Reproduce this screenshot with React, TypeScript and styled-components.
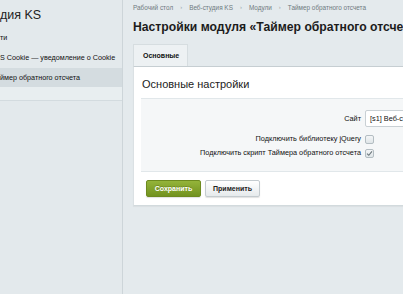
import React from 'react';
import styled, { createGlobalStyle } from 'styled-components';

const GlobalStyle = createGlobalStyle`
  html, body {
    margin: 0;
    padding: 0;
    background: #e4eaed;
    overflow: hidden;
  }
  body {
    font-family: 'Liberation Sans', Arial, sans-serif;
    color: #000;
  }
`;

const Page = styled.div`
  display: flex;
  width: 700px;
  height: 294px;
`;

const Sidebar = styled.aside`
  width: 122px;
  flex-shrink: 0;
  border-right: 1px solid #cdd5d9;
  background: #e3e9ec;
  overflow: hidden;
`;

const SideTitle = styled.div`
  font-size: 12.5px;
  color: #222;
  white-space: nowrap;
  padding: 7px 0 0 0;
  height: 21px;
  line-height: 16px;
`;

const SideItem = styled.div<{ $active?: boolean }>`
  font-size: 7.2px;
  color: #111;
  white-space: nowrap;
  height: ${(p) => (p.$active ? '19px' : '20px')};
  line-height: ${(p) => (p.$active ? '19px' : '20px')};
  background: ${(p) => (p.$active ? '#d4dce0' : 'transparent')};
`;

const SideSpacer = styled.div`
  height: 13px;
  background: #e8eef0;
  border-bottom: 1px solid #d3dbdf;
`;

const Main = styled.main`
  flex: 1;
  padding-left: 10px;
  min-width: 0;
`;

const Crumbs = styled.nav`
  display: flex;
  align-items: center;
  gap: 7px;
  height: 12px;
  padding-top: 1px;
  font-size: 6.4px;
  color: #6f7a80;
  white-space: nowrap;
`;

const Sep = styled.span`
  color: #9aa4a9;
  font-size: 6px;
`;

const Title = styled.h1`
  margin: 0;
  padding-top: 6px;
  height: 31px;
  box-sizing: border-box;
  font-size: 12.2px;
  line-height: 16px;
  font-weight: bold;
  color: #1c1c1c;
  white-space: nowrap;
`;

const Tabs = styled.div`
  display: flex;
  height: 22px;
`;

const Tab = styled.div`
  display: flex;
  align-items: center;
  padding: 0 9px;
  width: 55px;
  box-sizing: border-box;
  background: #edf1f3;
  border: 1px solid #d6dde0;
  border-bottom: none;
  font-size: 7px;
  font-weight: bold;
  color: #111;
`;

const Panel = styled.section`
  background: #fff;
  border-top: 1px solid #c6ced2;
  border-left: 1px solid #dbe1e4;
  border-bottom: 1px solid #d2dadd;
  box-shadow: 0 1px 1px rgba(0, 0, 0, 0.04);
`;

const PanelHead = styled.div`
  height: 31px;
  box-sizing: border-box;
  padding: 10px 0 0 8px;
  font-size: 11px;
  line-height: 14px;
  color: #222;
`;

const FormArea = styled.div`
  margin-left: 7px;
  background: #f5f7f8;
  border-top: 1px solid #e1e7ea;
  border-bottom: 1px solid #e1e7ea;
  padding: 11px 0 12px;
  display: grid;
  grid-template-columns: 220px 1fr;
  column-gap: 4px;
  row-gap: 2px;
  align-items: center;
`;

const Label = styled.div<{ $spaced?: boolean }>`
  text-align: right;
  font-size: 7.3px;
  color: #111;
  white-space: nowrap;
  line-height: 12px;
  margin-bottom: ${(p) => (p.$spaced ? '4px' : '0')};
`;

const Select = styled.div`
  width: 200px;
  height: 17px;
  box-sizing: border-box;
  border: 1px solid #c9d0d4;
  border-radius: 2px;
  background: #fff;
  font-size: 7.3px;
  line-height: 15px;
  padding-left: 4px;
  color: #111;
  margin-bottom: 4px;
`;

const Check = styled.div`
  width: 9px;
  height: 9px;
  box-sizing: border-box;
  border: 1px solid #b3bdc2;
  border-radius: 2px;
  background: linear-gradient(#f4f6f7, #dfe5e8);
  display: flex;
  align-items: center;
  justify-content: center;
`;

const Buttons = styled.div`
  display: flex;
  gap: 4px;
  padding: 8px 0 8px 12px;
`;

const Button = styled.button<{ $primary?: boolean }>`
  height: 17px;
  width: 55px;
  padding: 0;
  border-radius: 2px;
  font-family: 'Liberation Sans', Arial, sans-serif;
  font-size: 7px;
  font-weight: bold;
  cursor: pointer;
  border: 1px solid ${(p) => (p.$primary ? '#6d8a1f' : '#c4cbcf')};
  color: ${(p) => (p.$primary ? '#fff' : '#222')};
  background: ${(p) =>
    p.$primary
      ? 'linear-gradient(#94b43a, #72921f)'
      : 'linear-gradient(#ffffff, #e6eaec)'};
  box-shadow: 0 1px 1px rgba(0, 0, 0, 0.12);
  text-shadow: ${(p) => (p.$primary ? '0 -1px 0 rgba(0,0,0,0.2)' : 'none')};
`;

const CheckMark = () => (
  <svg width="7" height="7" viewBox="0 0 7 7">
    <path d="M1 3.6 L2.8 5.3 L6 1.4" fill="none" stroke="#6c777c" strokeWidth="1.1" />
  </svg>
);

export default function App() {
  return (
    <>
      <GlobalStyle />
      <Page>
        <Sidebar>
          <SideTitle>дия KS</SideTitle>
          <SideItem>ти</SideItem>
          <SideItem>S Cookie — уведомление о Cookie</SideItem>
          <SideItem $active>ймер обратного отсчета</SideItem>
          <SideSpacer />
        </Sidebar>
        <Main>
          <Crumbs>
            <span>Рабочий стол</span>
            <Sep>›</Sep>
            <span>Веб-студия KS</span>
            <Sep>›</Sep>
            <span>Модули</span>
            <Sep>›</Sep>
            <span>Таймер обратного отсчета</span>
          </Crumbs>
          <Title>Настройки модуля «Таймер обратного отсчета»</Title>
          <Tabs>
            <Tab>Основные</Tab>
          </Tabs>
          <Panel>
            <PanelHead>Основные настройки</PanelHead>
            <FormArea>
              <Label $spaced>Сайт</Label>
              <Select>[s1] Веб-студия KS</Select>
              <Label>Подключить библиотеку jQuery</Label>
              <Check />
              <Label>Подключить скрипт Таймера обратного отсчета</Label>
              <Check>
                <CheckMark />
              </Check>
            </FormArea>
            <Buttons>
              <Button $primary>Сохранить</Button>
              <Button>Применить</Button>
            </Buttons>
          </Panel>
        </Main>
      </Page>
    </>
  );
}
